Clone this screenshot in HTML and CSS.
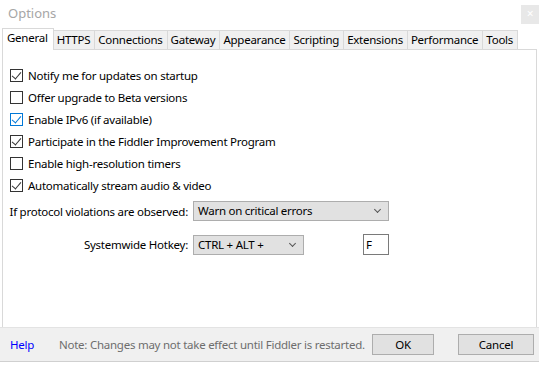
FILE: index.html
```html
<!doctype html>
<html lang="en">
<head>
    <meta charset="UTF-8">
    <title>Options</title>
    <link rel="stylesheet" href="styles.css">
</head>
<body>
    <div class="window">
        <!-- title -->
        <div class="titlebar">
            <span class="title">Options</span>
            <div class="close">&times;</div>
        </div>
        <!-- tabs -->
        <div class="tabs">
            <div class="tab active">General</div>
            <div class="tab">HTTPS</div>
            <div class="tab">Connections</div>
            <div class="tab">Gateway</div>
            <div class="tab">Appearance</div>
            <div class="tab">Scripting</div>
            <div class="tab">Extensions</div>
            <div class="tab">Performance</div>
            <div class="tab">Tools</div>
        </div>
        <!-- panel -->
        <div class="panel">
            <ul class="checks">
                <li><span class="box on"></span>Notify me for updates on startup</li>
                <li><span class="box"></span>Offer upgrade to Beta versions</li>
                <li><span class="box on focus"></span>Enable IPv6 (if available)</li>
                <li><span class="box on"></span>Participate in the Fiddler Improvement Program</li>
                <li><span class="box"></span>Enable high-resolution timers</li>
                <li><span class="box on"></span>Automatically stream audio &amp; video</li>
            </ul>
            <div class="form">
                <div class="row">
                    <label class="lbl">If protocol violations are observed:</label>
                    <div class="select wide">Warn on critical errors<span class="chev"></span></div>
                </div>
                <div class="row">
                    <label class="lbl">Systemwide Hotkey:</label>
                    <div class="select narrow">CTRL + ALT +<span class="chev"></span></div>
                    <div class="key">F</div>
                </div>
            </div>
        </div>
        <!-- footer -->
        <div class="footer">
            <a class="help">Help</a>
            <span class="note">Note: Changes may not take effect until Fiddler is restarted.</span>
            <div class="btn ok">OK</div>
            <div class="btn cancel">Cancel</div>
        </div>
        <div class="under"></div>
    </div>
</body>
</html>
```
FILE: styles.css
```css
* {
    margin: 0;
    padding: 0;
    box-sizing: border-box;
}
body {
    width: 539px;
    height: 368px;
    overflow: hidden;
    background: #fff;
    font-family: "Noto Sans", "Open Sans", sans-serif;
    font-size: 11.5px;
    letter-spacing: -0.25px;
    color: #000;
}
.window {
    display: flex;
    flex-direction: column;
    height: 368px;
}

/* title */
.titlebar {
    display: flex;
    justify-content: space-between;
    height: 29px;
    padding: 5px 0 0 8px;
}
.titlebar .title {
    font-size: 13px;
    line-height: 17px;
    letter-spacing: 0;
    color: #a6a6a6;
}
.titlebar .close {
    width: 18px;
    height: 19px;
    background: #e8e8e8;
    color: #fff;
    font-size: 12px;
    line-height: 18px;
    text-align: center;
}

/* tabs */
.tabs {
    display: flex;
    align-items: flex-end;
    height: 21px;
    padding-left: 2px;
    position: relative;
    z-index: 1;
}
.tab {
    height: 20px;
    padding: 0 4px 0 3px;
    line-height: 18px;
    background: #f0f0f0;
    border: 1px solid #d9d9d9;
    border-left: none;
    white-space: nowrap;
}
.tab.active {
    height: 22px;
    padding: 0 5px 0 4px;
    background: #fff;
    border: 1px solid #d9d9d9;
    border-bottom: none;
    line-height: 18px;
}

/* panel */
.panel {
    height: 278px;
    margin: -1px 2px 0 2px;
    border: 1px solid #d9d9d9;
    border-bottom: none;
    background: #fff;
}
.checks {
    list-style: none;
    padding: 14px 0 0 7px;
}
.checks li {
    display: flex;
    align-items: center;
    height: 22px;
}
.box {
    position: relative;
    width: 13px;
    height: 13px;
    margin-right: 5px;
    border: 1px solid #333;
    background: #fff;
}
.box.on::after {
    content: "";
    position: absolute;
    left: 3px;
    top: 0;
    width: 4px;
    height: 8px;
    border: solid #333;
    border-width: 0 1px 1px 0;
    transform: rotate(40deg);
}
.box.focus {
    border-color: #0078d7;
}
.box.focus::after {
    border-color: #0078d7;
}

.form {
    display: flex;
    flex-direction: column;
    gap: 13px;
    padding-top: 5px;
}
.form .row {
    display: flex;
    align-items: center;
}
.lbl {
    width: 190px;
    padding-right: 5px;
    text-align: right;
    white-space: nowrap;
}
.select {
    position: relative;
    height: 20px;
    padding-left: 4px;
    line-height: 18px;
    background: #e1e1e1;
    border: 1px solid #adadad;
}
.select.wide {
    width: 196px;
}
.select.narrow {
    width: 111px;
}
.chev {
    position: absolute;
    right: 8px;
    top: 5px;
    width: 5px;
    height: 5px;
    border: solid #555;
    border-width: 0 1px 1px 0;
    transform: rotate(45deg);
}
.key {
    width: 26px;
    height: 21px;
    margin-left: 59px;
    padding-left: 2px;
    line-height: 19px;
    border: 1px solid #7a7a7a;
    color: #000;
}

/* footer */
.footer {
    display: flex;
    align-items: center;
    height: 35px;
    padding: 0 0 0 10px;
    background: #f0f0f0;
    border-top: 1px solid #e3e3e3;
    border-bottom: 1px solid #d0d0d0;
    white-space: nowrap;
}
.help {
    color: #0000ff;
    width: 49px;
}
.note {
    color: #6d6d6d;
    width: 313px;
}
.btn {
    height: 21px;
    line-height: 19px;
    text-align: center;
    background: #e1e1e1;
    border: 1px solid #adadad;
}
.btn.ok {
    width: 62px;
}
.btn.cancel {
    width: 76px;
    margin-left: 24px;
}
.under {
    flex: 1;
    background: #fff;
}
```
